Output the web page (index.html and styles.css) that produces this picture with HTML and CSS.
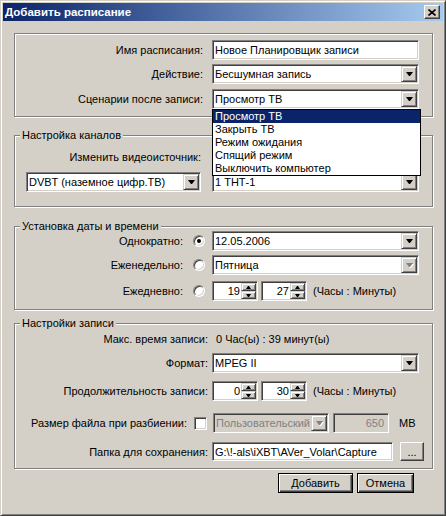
FILE: index.html
```html
<!DOCTYPE html>
<html lang="ru">
    <head>
        <meta charset="UTF-8">
        <title>Добавить расписание</title>
        <link rel="stylesheet" href="styles.css">
    </head>
    <body>
        <div class="window">
            <div class="titlebar">
                <span class="title">Добавить расписание</span>
                <span class="close">
                    <svg width="8" height="7" viewBox="0 0 8 7"><path d="M0.5 0.5 L7.5 6.5 M7.5 0.5 L0.5 6.5" stroke="#000" stroke-width="1.6" fill="none"/></svg>
                </span>
            </div>

            <div class="content">
                <!-- name / action / after-record -->
                <div class="group g-main">
                    <div class="row">
                        <span class="label">Имя расписания:</span>
                        <div class="edit w207"><span class="text">Новое Планировщик записи</span></div>
                    </div>
                    <div class="row r2">
                        <span class="label">Действие:</span>
                        <div class="combo w207"><span class="text">Бесшумная запись</span><span class="drop"><i class="arrow"></i></span></div>
                    </div>
                    <div class="row r3">
                        <span class="label">Сценарии после записи:</span>
                        <div class="combo w207 open">
                            <span class="text">Просмотр ТВ</span><span class="drop"><i class="arrow"></i></span>
                            <ul class="dropdown-list">
                                <li class="selected">Просмотр ТВ</li>
                                <li>Закрыть ТВ</li>
                                <li>Режим ожидания</li>
                                <li>Спящий режим</li>
                                <li>Выключить компьютер</li>
                            </ul>
                        </div>
                    </div>
                </div>

                <div class="group g-chan">
                    <div class="group-title">Настройка каналов</div>
                    <div class="caption">Изменить видеоисточник:</div>
                    <div class="row">
                        <div class="combo w175"><span class="text">DVBT (наземное цифр.ТВ)</span><span class="drop"><i class="arrow"></i></span></div>
                        <div class="combo w207"><span class="text">1 ТНТ-1</span><span class="drop"><i class="arrow"></i></span></div>
                    </div>
                </div>

                <div class="group g-date">
                    <div class="group-title">Установка даты и времени</div>
                    <div class="row">
                        <span class="label">Однократно:<i class="radio checked"></i></span>
                        <div class="combo w207"><span class="text">12.05.2006</span><span class="drop"><i class="arrow"></i></span></div>
                    </div>
                    <div class="row r2">
                        <span class="label">Еженедельно:<i class="radio"></i></span>
                        <div class="combo w207"><span class="text">Пятница</span><span class="drop"><i class="arrow off"></i></span></div>
                    </div>
                    <div class="row r3">
                        <span class="label">Ежедневно:<i class="radio"></i></span>
                        <div class="spin"><span class="spin-val">19</span><span class="spin-btns"><span class="sb"><i class="up"></i></span><span class="sb"><i class="down"></i></span></span></div>
                        <div class="spin"><span class="spin-val">27</span><span class="spin-btns"><span class="sb"><i class="up"></i></span><span class="sb"><i class="down"></i></span></span></div>
                        <span class="hint">(Часы : Минуты)</span>
                    </div>
                </div>

                <div class="group g-rec">
                    <div class="group-title">Настройки записи</div>
                    <div class="row info">
                        <span class="label">Макс. время записи:</span>
                        <span class="value">0 Час(ы) : 39 минут(ы)</span>
                    </div>
                    <div class="row r-format">
                        <span class="label">Формат:</span>
                        <div class="combo w207"><span class="text">MPEG II</span><span class="drop"><i class="arrow"></i></span></div>
                    </div>
                    <div class="row r-length">
                        <span class="label">Продолжительность записи:</span>
                        <div class="spin"><span class="spin-val">0</span><span class="spin-btns"><span class="sb"><i class="up"></i></span><span class="sb"><i class="down"></i></span></span></div>
                        <div class="spin"><span class="spin-val">30</span><span class="spin-btns"><span class="sb"><i class="up"></i></span><span class="sb"><i class="down"></i></span></span></div>
                        <span class="hint">(Часы : Минуты)</span>
                    </div>
                    <div class="row r-split">
                        <span class="label">Размер файла при разбиении:<i class="check"></i></span>
                        <div class="combo w116 disabled"><span class="text">Пользовательский</span><span class="drop"><i class="arrow off"></i></span></div>
                        <div class="edit w56 disabled"><span class="text num">650</span></div>
                        <span class="unit">MB</span>
                    </div>
                    <div class="row r-folder">
                        <span class="label">Папка для сохранения:</span>
                        <div class="edit w181"><span class="text">G:\!-als\iXBT\AVer_Volar\Capture</span></div>
                        <button class="btn browse">...</button>
                    </div>
                </div>

                <div class="actions">
                    <button class="btn default w75">Добавить</button>
                    <button class="btn default w57">Отмена</button>
                </div>
            </div>
        </div>
    </body>
</html>
```

FILE: styles.css
```css
* {
    margin: 0;
    padding: 0;
    box-sizing: border-box;
}

body {
    background: #d4d0c8;
    color: #000;
    font-family: 'Liberation Sans', Arial, sans-serif;
    font-size: 11px;
}

.window {
    width: 446px;
    height: 516px;
    padding: 2px;
    background: #d4d0c8;
    border: 1px solid;
    border-color: #d4d0c8 #404040 #404040 #d4d0c8;
    box-shadow: inset 1px 1px #fff, inset -1px -1px #808080;
}

.titlebar {
    height: 18px;
    display: flex;
    align-items: center;
    justify-content: space-between;
    padding: 0 3px 0 2px;
    background: linear-gradient(to right, #0a246a, #a6caf0);
    color: #fff;
    font-size: 11.5px;
    font-weight: bold;
}

.close {
    width: 16px;
    height: 14px;
    display: flex;
    align-items: center;
    justify-content: center;
    background: #d4d0c8;
    border: 1px solid;
    border-color: #fff #404040 #404040 #fff;
    box-shadow: inset -1px -1px #808080;
}

.content {
    padding: 12px 10px 0 11px;
}

/* etched group boxes */
.group {
    border: 1px solid #808080;
    box-shadow: inset 1px 1px #fff, 1px 1px #fff;
}

.group-title {
    display: table;
    height: 10px;
    line-height: 10px;
    margin: -6px 0 0 5px;
    padding: 0 2px;
    background: #d4d0c8;
    white-space: nowrap;
}

.row {
    display: flex;
    align-items: center;
}

.label {
    flex: none;
    display: flex;
    align-items: center;
    justify-content: flex-end;
    white-space: nowrap;
}

/* widgets */
.edit,
.combo,
.spin {
    display: flex;
    height: 20px;
    padding: 1px;
    background: #fff;
    border: 1px solid;
    border-color: #808080 #fff #fff #808080;
    box-shadow: inset 1px 1px #404040, inset -1px -1px #d4d0c8;
}

.combo {
    position: relative;
}

.text {
    flex: 1;
    padding-left: 1px;
    line-height: 16px;
    white-space: nowrap;
    overflow: hidden;
}

.drop {
    flex: none;
    width: 16px;
    height: 16px;
    display: flex;
    align-items: center;
    justify-content: center;
    background: #d4d0c8;
    border: 1px solid;
    border-color: #d4d0c8 #404040 #404040 #d4d0c8;
    box-shadow: inset 1px 1px #fff, inset -1px -1px #808080;
}

.arrow {
    box-sizing: content-box;
    width: 1px;
    height: 0;
    border-left: 3px solid transparent;
    border-right: 3px solid transparent;
    border-top: 4px solid #000;
}

.arrow.off {
    border-top-color: #808080;
    filter: drop-shadow(1px 1px 0 #fff);
}

.disabled {
    background: #d4d0c8;
    color: #808080;
}

.num {
    text-align: right;
    padding-right: 3px;
}

.dropdown-list {
    position: absolute;
    top: calc(100% + 1px);
    left: -1px;
    width: 209px;
    list-style: none;
    background: #fff;
    border: 1px solid #000;
    z-index: 2;
}

.dropdown-list li {
    height: 13px;
    line-height: 13px;
    padding-left: 2px;
}

.dropdown-list .selected {
    background: #0a246a;
    color: #fff;
}

.spin {
    width: 46px;
    margin-right: 3px;
}

.spin-val {
    flex: 1;
    text-align: right;
    line-height: 16px;
    padding-right: 1px;
}

.spin-btns {
    width: 15px;
    display: flex;
    flex-direction: column;
}

.sb {
    flex: 1;
    display: flex;
    align-items: center;
    justify-content: center;
    background: #d4d0c8;
    border: 1px solid;
    border-color: #d4d0c8 #404040 #404040 #d4d0c8;
    box-shadow: inset 1px 1px #fff, inset -1px -1px #808080;
}

.up,
.down {
    box-sizing: content-box;
    width: 1px;
    height: 0;
    border-left: 2px solid transparent;
    border-right: 2px solid transparent;
}

.up {
    border-bottom: 3px solid #000;
}

.down {
    border-top: 3px solid #000;
}

.hint {
    margin-left: 3px;
}

.radio {
    width: 12px;
    height: 12px;
    margin-left: 10px;
    border-radius: 50%;
    background: #fff;
    border: 1px solid;
    border-color: #808080 #fff #fff #808080;
    box-shadow: inset 1px 1px #404040, inset -1px -1px #d4d0c8;
    display: flex;
    align-items: center;
    justify-content: center;
}

.radio.checked::after {
    content: '';
    width: 4px;
    height: 4px;
    border-radius: 50%;
    background: #000;
}

.check {
    width: 13px;
    height: 13px;
    margin-left: 7px;
    background: #fff;
    border: 1px solid;
    border-color: #808080 #fff #fff #808080;
    box-shadow: inset 1px 1px #404040, inset -1px -1px #d4d0c8;
}

.btn {
    height: 20px;
    background: #d4d0c8;
    font-family: 'Liberation Sans', Arial, sans-serif;
    font-size: 11px;
    color: #000;
    border: 1px solid;
    border-color: #fff #404040 #404040 #fff;
    box-shadow: inset -1px -1px #808080;
}

.btn.default {
    border-color: #000;
    box-shadow: inset 1px 1px #fff, inset -1px -1px #404040, inset -2px -2px #808080;
}

.w56 { width: 56px; }
.w57 { width: 57px; }
.w75 { width: 75px; }
.w116 { width: 116px; }
.w175 { width: 175px; }
.w181 { width: 181px; }
.w207 { width: 207px; }

/* first box: name, action, after-record */
.g-main {
    padding: 6px 0 7px;
}

.g-main .label {
    width: 188px;
    margin-right: 9px;
}

.g-main .r2 {
    margin-top: 4px;
}

.g-main .r3 {
    margin-top: 5px;
}

/* channels */
.g-chan {
    margin-top: 18px;
    padding-bottom: 14px;
}

.caption {
    width: 175px;
    margin: 10px 0 0 11px;
    line-height: 14px;
    text-align: right;
}

.g-chan .row {
    margin: 8px 0 0 11px;
    gap: 11px;
}

/* date and time */
.g-date {
    margin-top: 19px;
    padding-bottom: 8px;
}

.g-date .label {
    width: 190px;
    margin-right: 7px;
}

.g-date .r2 {
    margin-top: 4px;
}

.g-date .r3 {
    margin-top: 6px;
}

/* record settings */
.g-rec {
    margin-top: 13px;
    padding-bottom: 7px;
}

.g-rec .label {
    width: 193px;
    margin-right: 4px;
}

.info {
    margin-top: 4px;
    line-height: 14px;
}

.value {
    margin-left: 4px;
}

.r-format {
    margin-top: 7px;
}

.r-length {
    margin-top: 8px;
}

.r-split {
    margin-top: 12px;
}

.r-split .label {
    width: 192px;
    margin-right: 6px;
}

.r-split .combo {
    margin-right: 4px;
}

.unit {
    margin-left: 10px;
}

.r-folder {
    margin-top: 9px;
}

.r-folder .edit {
    height: 19px;
}

.browse {
    width: 24px;
    height: 19px;
    margin-left: 7px;
}

.actions {
    display: flex;
    justify-content: flex-end;
    gap: 4px;
    margin-top: 4px;
    padding-right: 19px;
}
```
